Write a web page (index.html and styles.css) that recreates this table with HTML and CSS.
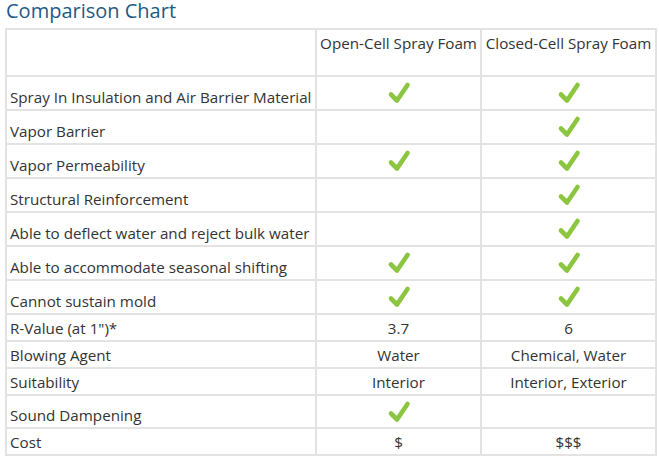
FILE: index.html
```html
<!DOCTYPE html>
<html>
<head>
<meta charset="utf-8">
<link rel="stylesheet" href="styles.css">
</head>
<body>
<div class="wrap">
  <h2 class="title">Comparison Chart</h2>
  <table class="chart">
    <colgroup>
      <col class="c1"><col class="c2"><col class="c3">
    </colgroup>
    <tr class="head">
      <th></th>
      <th>Open-Cell Spray Foam</th>
      <th>Closed-Cell Spray Foam</th>
    </tr>
    <tr class="chk">
      <td>Spray In Insulation and Air Barrier Material</td>
      <td><svg class="tick" viewBox="0 0 24 24"><path d="M4 13.5 L10 19.5 L20.5 4"/></svg></td>
      <td><svg class="tick" viewBox="0 0 24 24"><path d="M4 13.5 L10 19.5 L20.5 4"/></svg></td>
    </tr>
    <tr class="chk">
      <td>Vapor Barrier</td>
      <td></td>
      <td><svg class="tick" viewBox="0 0 24 24"><path d="M4 13.5 L10 19.5 L20.5 4"/></svg></td>
    </tr>
    <tr class="chk">
      <td>Vapor Permeability</td>
      <td><svg class="tick" viewBox="0 0 24 24"><path d="M4 13.5 L10 19.5 L20.5 4"/></svg></td>
      <td><svg class="tick" viewBox="0 0 24 24"><path d="M4 13.5 L10 19.5 L20.5 4"/></svg></td>
    </tr>
    <tr class="chk">
      <td>Structural Reinforcement</td>
      <td></td>
      <td><svg class="tick" viewBox="0 0 24 24"><path d="M4 13.5 L10 19.5 L20.5 4"/></svg></td>
    </tr>
    <tr class="chk">
      <td>Able to deflect water and reject bulk water</td>
      <td></td>
      <td><svg class="tick" viewBox="0 0 24 24"><path d="M4 13.5 L10 19.5 L20.5 4"/></svg></td>
    </tr>
    <tr class="chk">
      <td>Able to accommodate seasonal shifting</td>
      <td><svg class="tick" viewBox="0 0 24 24"><path d="M4 13.5 L10 19.5 L20.5 4"/></svg></td>
      <td><svg class="tick" viewBox="0 0 24 24"><path d="M4 13.5 L10 19.5 L20.5 4"/></svg></td>
    </tr>
    <tr class="chk">
      <td>Cannot sustain mold</td>
      <td><svg class="tick" viewBox="0 0 24 24"><path d="M4 13.5 L10 19.5 L20.5 4"/></svg></td>
      <td><svg class="tick" viewBox="0 0 24 24"><path d="M4 13.5 L10 19.5 L20.5 4"/></svg></td>
    </tr>
    <tr class="txt">
      <td>R-Value (at 1")*</td>
      <td>3.7</td>
      <td>6</td>
    </tr>
    <tr class="txt">
      <td>Blowing Agent</td>
      <td>Water</td>
      <td>Chemical, Water</td>
    </tr>
    <tr class="txt">
      <td>Suitability</td>
      <td>Interior</td>
      <td>Interior, Exterior</td>
    </tr>
    <tr class="chk short">
      <td>Sound Dampening</td>
      <td><svg class="tick" viewBox="0 0 24 24"><path d="M4 13.5 L10 19.5 L20.5 4"/></svg></td>
      <td></td>
    </tr>
    <tr class="txt">
      <td>Cost</td>
      <td>$</td>
      <td>$$$</td>
    </tr>
  </table>
</div>
</body>
</html>
```

FILE: styles.css
```css
html, body {
  margin: 0;
  padding: 0;
  background: #ffffff;
}
.wrap {
  padding: 0 5px;
  font-family: "Open Sans", "Liberation Sans", sans-serif;
  color: #333333;
}
.title {
  margin: 0 0 6px 1px;
  font-size: 20px;
  font-weight: 400;
  line-height: 22px;
  color: #1d5a89;
}
.chart {
  width: 650px;
  border-collapse: collapse;
  table-layout: fixed;
  font-size: 15.2px;
  line-height: 20px;
}
.c1 { width: 310px; }
.c2 { width: 165px; }
.c3 { width: 175px; }
.chart th,
.chart td {
  border: 2px solid #e3e3e3;
  padding: 0 3px;
  text-align: center;
  white-space: nowrap;
}
.chart th {
  font-weight: 400;
  vertical-align: top;
  height: 42px;
  padding-top: 3px;
}
.chart td:first-child {
  text-align: left;
}
.chk td {
  height: 30px;
  vertical-align: bottom;
  padding-bottom: 2px;
}
.chk td:not(:first-child) {
  vertical-align: middle;
  padding-bottom: 0;
}
.short td {
  height: 29px;
}
.txt td {
  height: 25px;
  vertical-align: middle;
}
.tick {
  display: block;
  width: 24px;
  height: 24px;
  margin: 0 auto;
  fill: none;
  stroke: #8cc53f;
  stroke-width: 4.6;
  stroke-linecap: round;
  stroke-linejoin: round;
}
```
